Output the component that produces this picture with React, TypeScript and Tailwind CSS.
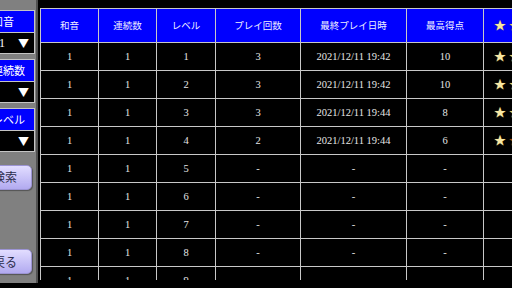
import React from 'react';

const jp = { fontFamily: '"Noto Sans CJK JP", "Noto Sans", sans-serif' };
const serif = { fontFamily: '"Liberation Serif", "Noto Sans CJK JP", serif' };

const headers = ['和音', '連続数', 'レベル', 'プレイ回数', '最終プレイ日時', '最高得点'];

type Row = { chord: number; streak: number; level: number; plays: string; last: string; best: string; stars: string[] };

const rows: Row[] = [
  { chord: 1, streak: 1, level: 1, plays: '3', last: '2021/12/11 19:42', best: '10', stars: ['#f6e7a4', '#e8d070'] },
  { chord: 1, streak: 1, level: 2, plays: '3', last: '2021/12/11 19:42', best: '10', stars: ['#f6e7a4', '#e8d070'] },
  { chord: 1, streak: 1, level: 3, plays: '3', last: '2021/12/11 19:44', best: '8', stars: ['#f6e7a4', '#e8d070'] },
  { chord: 1, streak: 1, level: 4, plays: '2', last: '2021/12/11 19:44', best: '6', stars: ['#f6e7a4', '#a8480c'] },
  { chord: 1, streak: 1, level: 5, plays: '-', last: '-', best: '-', stars: [] },
  { chord: 1, streak: 1, level: 6, plays: '-', last: '-', best: '-', stars: [] },
  { chord: 1, streak: 1, level: 7, plays: '-', last: '-', best: '-', stars: [] },
  { chord: 1, streak: 1, level: 8, plays: '-', last: '-', best: '-', stars: [] },
  { chord: 1, streak: 1, level: 9, plays: '-', last: '-', best: '-', stars: [] },
];

function FilterBox({ label, value }: { label: string; value?: string }) {
  return (
    <div className="border border-[#c4c4c4] flex flex-col">
      <div className="h-[21px] bg-[#0000ff] text-white text-[11px] leading-[21px] pl-[20px]" style={jp}>
        {label}
      </div>
      <div className="h-[21px] bg-black border-t border-[#c4c4c4] flex items-center justify-between pl-[27px] pr-[5px] text-white">
        <span className="text-[12px]" style={serif}>{value}</span>
        <span className="text-[11px] leading-none" style={jp}>▼</span>
      </div>
    </div>
  );
}

function PanelButton({ label }: { label: string }) {
  return (
    <button
      className="ml-[7px] w-[54px] h-[25px] rounded-[5px] border border-[#9c94d4] bg-gradient-to-b from-[#e2ddff] to-[#b2aaf0] text-[#2c2c4c] text-[12px] shadow-[1px_1px_1px_rgba(0,0,0,0.35)]"
      style={jp}
    >
      {label}
    </button>
  );
}

function Stars({ colors }: { colors: string[] }) {
  return (
    <div className="border-r border-b border-[#c8c8c8] flex items-center pl-[10px] gap-[3px] text-[12px] leading-none" style={jp}>
      {colors.map((c, i) => (
        <span key={i} className="-mt-[2px]" style={{ color: c, textShadow: '0 0 1px #8a6a20' }}>★</span>
      ))}
    </div>
  );
}

export default function App() {
  const cols = 'grid grid-cols-[58px_58px_59px_85px_106px_77px_80px]';
  return (
    <div className="w-[512px] h-[288px] bg-black flex overflow-hidden">
      <div className="w-[38px] h-[283px] bg-[#808080] border-r-2 border-[#505050] overflow-hidden shrink-0">
        <div className="w-[64px] -ml-[29px] pt-[10px] flex flex-col">
          <div className="flex flex-col gap-[5px]">
            <FilterBox label="和音" value="1" />
            <FilterBox label="連続数" />
            <FilterBox label="レベル" />
          </div>
          <div className="mt-[12px]">
            <PanelButton label="検索" />
          </div>
          <div className="mt-[59px]">
            <PanelButton label="戻る" />
          </div>
        </div>
      </div>

      <div className="ml-[2px] mt-[8px] h-[272px] overflow-hidden flex-1">
        <div className="w-[560px] border-l border-t border-[#c8c8c8]">
          <div className={`${cols} h-[34px] bg-[#0000ff]`}>
            {headers.map((h) => (
              <div
                key={h}
                className="border-r border-b border-[#c8c8c8] flex items-center justify-center text-[#f0f0ff] text-[9.5px]"
                style={jp}
              >
                {h}
              </div>
            ))}
            <Stars colors={['#f6e7a4', '#e8d070']} />
          </div>
          {rows.map((r) => (
            <div key={r.level} className={`${cols} h-[28px] text-[#e6e6e6] text-[10.5px]`} style={serif}>
              {[r.chord, r.streak, r.level, r.plays, r.last, r.best].map((v, i) => (
                <div key={i} className="border-r border-b border-[#c8c8c8] flex items-center justify-center">
                  {v}
                </div>
              ))}
              <Stars colors={r.stars} />
            </div>
          ))}
        </div>
      </div>
    </div>
  );
}
